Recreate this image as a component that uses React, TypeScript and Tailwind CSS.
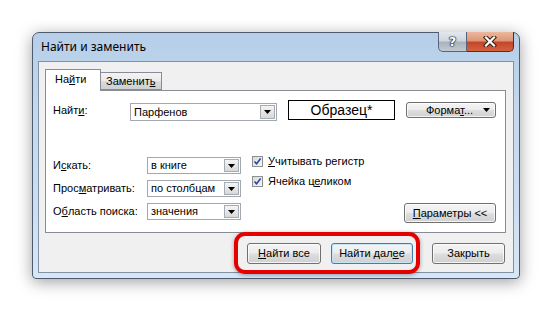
import React from "react";

function U({ children }: { children: React.ReactNode }) {
  return <span className="underline underline-offset-[1px]">{children}</span>;
}

function Arrow() {
  return (
    <svg width="7" height="4" viewBox="0 0 7 4">
      <path d="M0 0 H7 L3.5 4 Z" fill="#000" />
    </svg>
  );
}

function Combo({ value, className }: { value: string; className: string }) {
  return (
    <div className={`flex items-center border border-[#a3a8b0] bg-white ${className}`}>
      <span className="pl-[3px] text-[11px] leading-none">{value}</span>
      <div className="ml-auto mr-px flex h-[calc(100%-2px)] w-[15px] items-center justify-center border border-[#a6acb4] bg-[linear-gradient(180deg,#f5f5f5_0%,#e6e6e6_50%,#d8d8d8_100%)]">
        <Arrow />
      </div>
    </div>
  );
}

function Check({ children }: { children: React.ReactNode }) {
  return (
    <div className="flex h-[11px] items-center">
      <div className="flex h-[11px] w-[11px] items-center justify-center border border-[#8e8f8f] bg-[linear-gradient(135deg,#d8dade_0%,#f6f6f6_100%)]">
        <svg width="9" height="9" viewBox="0 0 9 9">
          <path d="M1.5 4.5 L3.6 6.8 L7.6 1.6" fill="none" stroke="#2b4a9b" strokeWidth="1.6" />
        </svg>
      </div>
      <span className="ml-[5px] text-[11px] leading-none">{children}</span>
    </div>
  );
}

function Btn({ children, className, primary }: { children: React.ReactNode; className: string; primary?: boolean }) {
  return (
    <div
      className={`flex items-center justify-center rounded-[3px] border text-[11px] leading-none text-black bg-[linear-gradient(180deg,#f4f4f4_0%,#ececec_48%,#dedede_52%,#d0d0d0_100%)] ${
        primary
          ? "border-[#3c7fb1] shadow-[inset_0_0_0_1px_#c4e5f6]"
          : "border-[#707070] shadow-[inset_0_0_0_1px_rgba(255,255,255,0.75)]"
      } ${className}`}
    >
      {children}
    </div>
  );
}

export default function App() {
  return (
    <div className="h-[313px] w-[553px] overflow-hidden bg-white pl-[32px] pt-[32px] font-['Liberation_Sans',Arial,sans-serif] text-black">
      <div className="flex h-[247px] w-[488px] flex-col rounded-t-[7px] rounded-b-[4px] border border-[#4e5b6c] bg-[linear-gradient(180deg,#b6cee8_0%,#c3d8ee_30%,#cbdef2_70%,#d8e7f7_100%)] shadow-[0_3px_16px_rgba(0,0,0,0.38)]">
        {/* title bar */}
        <div className="flex h-[28px] items-start">
          <span className="ml-[8px] mt-[7px] font-['Noto_Sans',sans-serif] text-[12px] leading-[14px] text-black">
            Найти и заменить
          </span>
          <div className="ml-auto mr-[5px] -mt-px flex">
            <div className="flex h-[20px] w-[29px] items-center justify-center rounded-bl-[5px] border border-t-0 border-[#56657a] bg-[linear-gradient(180deg,#e3e8ee_0%,#d0d7e0_45%,#aab2bc_55%,#c3cad2_100%)]">
              <span className="font-['DejaVu_Sans',sans-serif] text-[13px] font-bold leading-none text-white [text-shadow:0_0_1px_#1a1a1a,0_0_1px_#1a1a1a,0_0_1px_#1a1a1a,0_0_2px_#333]">
                ?
              </span>
            </div>
            <div className="flex h-[20px] w-[47px] items-center justify-center rounded-br-[5px] border border-l-0 border-t-0 border-[#5b2a1c] bg-[linear-gradient(180deg,#ebb89f_0%,#de9677_45%,#c3472a_55%,#d5623d_100%)]">
              <svg width="14" height="11" viewBox="0 0 14 11">
                <path d="M3 1.5 L11 9.5 M11 1.5 L3 9.5" stroke="#3a1a10" strokeWidth="4.2" strokeLinecap="square" />
                <path d="M3 1.5 L11 9.5 M11 1.5 L3 9.5" stroke="#fff" strokeWidth="2.2" strokeLinecap="square" />
              </svg>
            </div>
          </div>
        </div>

        {/* client area */}
        <div className="mx-[5px] flex h-[212px] flex-col border border-[#8192a7] bg-[#f0f0f0]">
          <div className="pl-[6px] pt-[7px]">
            {/* tabs */}
            <div className="flex h-[21px] items-end">
              <div className="relative z-10 -mb-px flex h-[22px] w-[56px] items-center border border-b-0 border-[#898c95] bg-white pl-[9px] pb-[2px] text-[11px] leading-none">
                На<U>й</U>ти
              </div>
              <div className="flex h-[18px] w-[61px] items-center border border-l-0 border-[#898c95] bg-[linear-gradient(180deg,#f3f3f3_0%,#ebebeb_50%,#dcdcdc_51%,#cfcfcf_100%)] pl-[5px] text-[11px] leading-none">
                Заменит<U>ь</U>
              </div>
            </div>

            {/* panel */}
            <div className="flex h-[143px] w-[461px] flex-col border border-[#898c95] bg-white">
              <div className="mt-[9px] flex h-[20px] items-center pl-[7px]">
                <span className="w-[77px] text-[11px] leading-none">
                  Найт<U>и</U>:
                </span>
                <Combo value="Парфенов" className="mt-[4px] h-[18px] w-[147px]" />
                <div className="ml-[11px] flex h-[20px] w-[107px] items-center justify-center border border-black text-[14px] leading-none">
                  Образец*
                </div>
                <Btn className="ml-[11px] h-[16px] w-[90px] justify-start pl-[19px]">
                  <span>
                    Форма<U>т</U>...
                  </span>
                  <span className="ml-auto mr-[5px] flex">
                    <Arrow />
                  </span>
                </Btn>
              </div>

              <div className="mt-[37px] flex items-start pl-[7px]">
                <div className="grid grid-cols-[94px_94px] gap-y-[6px]">
                  <span className="flex h-[17px] items-center text-[11px] leading-none">
                    И<U>с</U>кать:
                  </span>
                  <Combo value="в книге" className="h-[17px] w-[94px]" />
                  <span className="flex h-[17px] items-center text-[11px] leading-none">
                    Прос<U>м</U>атривать:
                  </span>
                  <Combo value="по столбцам" className="h-[17px] w-[94px]" />
                  <span className="flex h-[17px] items-center text-[11px] leading-none">
                    О<U>б</U>ласть поиска:
                  </span>
                  <Combo value="значения" className="h-[17px] w-[94px]" />
                </div>
                <div className="ml-[11px] -mt-px flex flex-col gap-[9px]">
                  <Check>
                    <U>У</U>читывать регистр
                  </Check>
                  <Check>
                    Ячейка ц<U>е</U>ликом
                  </Check>
                </div>
                <Btn className="ml-auto mr-[9px] mt-[46px] h-[20px] w-[92px]">
                  <U>П</U>араметры &lt;&lt;
                </Btn>
              </div>
            </div>
          </div>

          {/* footer buttons */}
          <div className="mt-[10px] flex justify-end pr-[8px]">
            <div className="relative flex gap-[10px]">
              <Btn className="h-[21px] w-[74px]">
                <U>Н</U>айти все
              </Btn>
              <Btn primary className="h-[21px] w-[82px]">
                Найти дал<U>е</U>е
              </Btn>
              <div className="pointer-events-none absolute -bottom-[10px] -left-[13px] -right-[7px] -top-[11px] rounded-[11px] border-[4px] border-[#e50000] shadow-[0_1px_4px_rgba(0,0,0,0.35)]" />
            </div>
            <Btn className="ml-[19px] h-[21px] w-[73px]">Закрыть</Btn>
          </div>
        </div>
      </div>
    </div>
  );
}
